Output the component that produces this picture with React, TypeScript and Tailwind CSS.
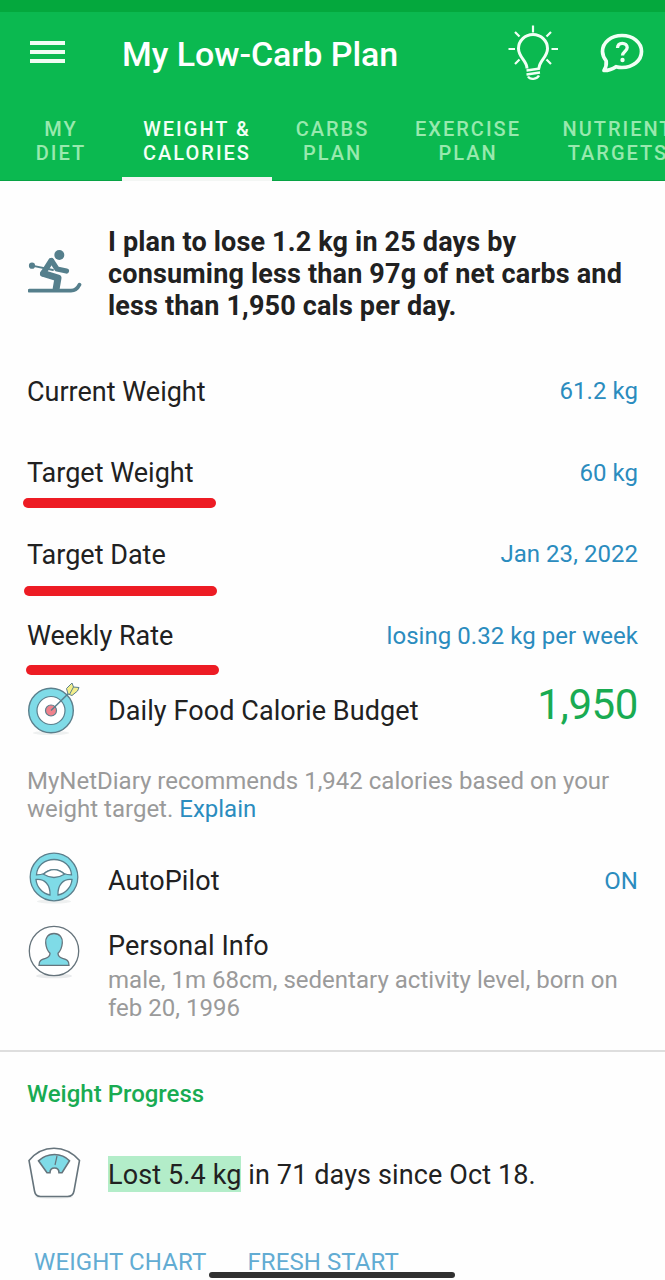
import type { ReactNode } from "react";

type Tab = { lines: [string, string]; className: string; active?: boolean };
type Stat = { label: string; value: string; mark?: string };

const tabs: Tab[] = [
  { lines: ["MY", "DIET"], className: "w-[122px]" },
  { lines: ["WEIGHT &", "CALORIES"], className: "w-[150px]", active: true },
  { lines: ["CARBS", "PLAN"], className: "w-[121px]" },
  { lines: ["EXERCISE", "PLAN"], className: "w-[150px]" },
  { lines: ["NUTRIENT", "TARGETS"], className: "w-[150px]" },
];

const stats: Stat[] = [
  { label: "Current Weight", value: "61.2 kg" },
  { label: "Target Weight", value: "60 kg", mark: "left-[23px] top-[65px]" },
  { label: "Target Date", value: "Jan 23, 2022", mark: "left-[24px] top-[72px]" },
  {
    label: "Weekly Rate",
    value: "losing 0.32 kg per week",
    mark: "left-[26px] top-[69px]",
  },
];

function BulbIcon() {
  return (
    <svg className="-mt-[2px]" width="52" height="56" viewBox="0 0 52 56" fill="none" stroke="#f1fff5">
      <path
        d="M20 43.500c0-8-8.500-11-8.500-20a14.500 14 0 0 1 29 0c0 9-8.500 12-8.500 20"
        strokeWidth="3"
      />
      <path
        d="M26 .5v7M8 7l4.500 4.500M44 7l-4.500 4.500M1.500 24H8M44.500 24H51M8 39l4.500-4.500M44 39l-4.500-4.500"
        strokeWidth="2.200"
      />
      <path
        d="M19.500 45.500 33 43.500M19.500 49.500 33 47.500M21 51.500c2 3.500 9 3 11-1"
        strokeWidth="2.300"
      />
    </svg>
  );
}

function HelpIcon() {
  return (
    <svg width="44" height="42" viewBox="0 0 44 42" fill="none" stroke="#f1fff5">
      <path
        d="M4 37.500c1.800-2.800 2.600-6 2.200-9.500C4 25 2.500 22 2.500 18.500 2.500 9.500 11 2.500 22 2.500s19.500 7 19.500 16-8.500 16-19.500 16c-2 0-4-.3-6-.8-3.500 2.500-7.500 3.800-12 3.800Z"
        strokeWidth="3.700"
        strokeLinejoin="round"
      />
      <path
        d="M17.500 15c.2-3 2-4.700 4.800-4.700 2.900 0 4.900 1.700 4.900 4.200 0 3.800-4.700 4-4.700 8"
        strokeWidth="3.300"
      />
      <circle cx="22.500" cy="27" r="2.200" fill="#f1fff5" stroke="none" />
    </svg>
  );
}

function SkierIcon() {
  return (
    <svg
      className="-mt-[1px]"
      width="54"
      height="46"
      viewBox="0 0 54 46"
      fill="none"
      stroke="#557f8c"
      strokeLinecap="round"
      strokeLinejoin="round"
    >
      <circle cx="31.300" cy="7" r="5" fill="#557f8c" stroke="none" />
      <circle cx="4" cy="17.700" r="3.100" fill="#557f8c" stroke="none" />
      <path d="M4 17.700 25 22" strokeWidth="1.800" />
      <path d="m23 13-8 12.500" strokeWidth="5.800" />
      <path d="m23.500 12.500 5.500 8.500 9.500 2" strokeWidth="5.200" />
      <path d="m15.500 25.500 14.500 4.500-1.800 10.500" strokeWidth="7" />
      <path d="M1.500 42.700H43c4 0 6.500-2 8.500-6" strokeWidth="3.700" />
    </svg>
  );
}

function TargetIcon() {
  return (
    <svg className="relative -top-[2px] -left-[1px]" width="54" height="54" viewBox="0 0 54 54" stroke="#5b7f8c">
      <ellipse cx="24" cy="51" rx="18" ry="2" fill="#eef0f0" stroke="none" />
      <circle cx="24" cy="28.500" r="22.300" fill="#7fdbe7" strokeWidth="1.400" />
      <circle cx="24" cy="28.500" r="14" fill="#fff" strokeWidth="1.200" />
      <circle cx="24" cy="28.500" r="5.500" fill="#f0828c" strokeWidth="1.200" />
      <path d="M24 28.500 46 7" strokeWidth="1.500" />
      <path
        d="m41 12-1.500-5.500L45 1l1.500 4L52 5.500 50.500 9 45 13.500Z"
        fill="#f3ee8b"
        strokeWidth="1"
      />
      <path d="m42.500 12.500 4-7.500" fill="none" />
    </svg>
  );
}

function WheelIcon() {
  return (
    <svg width="50" height="52" viewBox="0 0 50 52" stroke="#5b7f8c" strokeWidth="1.300">
      <ellipse cx="25" cy="49.500" rx="17" ry="2" fill="#eef0f0" stroke="none" />
      <circle cx="25" cy="25" r="23.800" fill="#7fdbe7" />
      <path
        d="M7.500 22.800C8 14 15.500 7.500 25 7.500S42 14 42.500 22.800c-3 0-5.500-.3-7.500-1.300-6-5-14-5-20 0-2 1-4.500 1.300-7.500 1.300Z"
        fill="#fff"
      />
      <path d="M14.500 22.300c6.500-6.300 14.500-6.300 21 0-6.500 4-14.500 4-21 0Z" fill="#fff" />
      <path d="M7 27.500c8.500-1 14.500 5 14 15.500C13.500 41.500 7.500 35 7 27.500Z" fill="#fff" />
      <path d="M43 27.500c-8.500-1-14.500 5-14 15.500C36.500 41.500 42.500 35 43 27.500Z" fill="#fff" />
    </svg>
  );
}

function PersonIcon() {
  return (
    <svg width="52" height="54" viewBox="0 0 52 54" stroke="#66747c" strokeWidth="1.300">
      <ellipse cx="26" cy="51" rx="18" ry="2.300" fill="#e9ebec" stroke="none" />
      <circle cx="26" cy="26" r="24.700" fill="#fff" />
      <path
        d="M26 8.500c-6 0-8.800 4.300-8.300 9.500.4 5 2 8 4.300 10.300 0 3.200-1.500 4.200-4.500 5-4.500 1.200-6.500 2.500-6.500 7h30c0-4.500-2-5.800-6.500-7-3-.8-4.500-1.800-4.500-5 2.300-2.300 3.900-5.300 4.300-10.300.5-5.200-2.300-9.500-8.300-9.500Z"
        fill="#7fdbe7"
      />
    </svg>
  );
}

function ScaleIcon() {
  return (
    <svg width="54" height="52" viewBox="0 0 54 52" stroke="#66747c" strokeWidth="1.600">
      <ellipse cx="26" cy="50" rx="19" ry="1.800" fill="#eceeee" stroke="none" />
      <path
        d="M1 13.500C7.500 5.500 16 1.200 26 1.200s18.500 4.300 25.500 12.300L46 44c-.6 3.500-2.500 5.500-6.500 5.500h-27C9 49.500 7.100 47.500 6.500 44Z"
        fill="#fff"
      />
      <path
        d="M10.500 13.800C15 9.500 20.500 7.500 26.500 7.500S37.500 9.500 41.500 13.800L34 25.700h-3c0-2.900-2-4.700-4.500-4.700S22 22.800 22 25.700h-3Z"
        fill="#7fdbe7"
      />
      <path d="m29 9-2 9" fill="none" strokeWidth="1.200" />
    </svg>
  );
}

function InfoRow({
  icon,
  className,
  children,
}: {
  icon: ReactNode;
  className: string;
  children: ReactNode;
}) {
  return (
    <div className={`flex pr-[27px] ${className}`}>
      <div className="w-[108px] shrink-0 pl-[28px]">{icon}</div>
      {children}
    </div>
  );
}

export default function App() {
  return (
    <div className="relative h-[1280px] w-[665px] overflow-hidden bg-[#fefefe] font-['Roboto',sans-serif] text-[#212121]">
      <header className="h-[181px] border-b border-[#07a344] border-t-[12px] border-t-[#04a83d] bg-[#0bb950] text-white">
        <div className="flex h-[84px] items-center">
          <button className="-mt-[5px] ml-[30px] flex h-[22px] w-[35px] flex-col justify-between" aria-label="Menu">
            <span className="h-1 w-full bg-[#effdf3]" />
            <span className="h-1 w-full bg-[#effdf3]" />
            <span className="h-1 w-full bg-[#effdf3]" />
          </button>
          <h1 className="mt-[1px] ml-[57px] grow whitespace-nowrap text-[34px] font-medium tracking-[-0.05px]">
            My Low-Carb Plan
          </h1>
          <BulbIcon />
          <div className="mr-[21px] ml-[41px]">
            <HelpIcon />
          </div>
        </div>
        <nav className="flex h-[85px] w-[720px]">
          {tabs.map((tab) => (
            <button
              key={tab.lines[0]}
              className={`flex shrink-0 flex-col items-center pt-[21px] text-[20px] leading-[24px] font-medium tracking-[2px] whitespace-nowrap ${tab.className} ${
                tab.active ? "border-b-4 border-[#f3f6f4] text-[#f3fff6]" : "text-[#98e9ae]"
              }`}
            >
              <span>{tab.lines[0]}</span>
              <span>{tab.lines[1]}</span>
            </button>
          ))}
        </nav>
      </header>

      <InfoRow className="h-[170px] pt-[45px]" icon={<div className="pt-[23px]"><SkierIcon /></div>}>
        <p className="text-[27px] leading-[32px] font-bold tracking-[0.17px] whitespace-nowrap">
          I plan to lose 1.2 kg in 25 days by
          <br />
          consuming less than 97g of net carbs and
          <br />
          less than 1,950 cals per day.
        </p>
      </InfoRow>

      {stats.map((stat) => (
        <div
          key={stat.label}
          className="relative flex h-[81.5px] items-center justify-between px-[27px]"
        >
          <span className="text-[27px]">{stat.label}</span>
          <span className="-mt-[1px] text-[24px] tracking-[0.04px] text-[#2b8cbe]">
            {stat.value}
          </span>
          {stat.mark && (
            <span className={`absolute h-[10px] w-[193px] rounded-full bg-[#ed1c24] ${stat.mark}`} />
          )}
        </div>
      ))}

      <InfoRow className="h-[67px] items-center" icon={<TargetIcon />}>
        <span className="mt-[2px] grow text-[27px] tracking-[0.08px] whitespace-nowrap">
          Daily Food Calorie Budget
        </span>
        <span className="-mt-[11px] text-[42px] leading-none tracking-[-0.4px] text-[#19ab52]">
          1,950
        </span>
      </InfoRow>

      <p className="mt-[23px] h-[56px] px-[27px] text-[24px] leading-[28px] whitespace-nowrap text-[#9a9a9a]">
        MyNetDiary recommends 1,942 calories based on your
        <br />
        weight target. <a className="text-[#2b8cbe]">Explain</a>
      </p>

      <InfoRow className="h-[101px] pt-[29px]" icon={<div className="pl-[1px]"><WheelIcon /></div>}>
        <span className="mt-[11px] grow text-[27px] leading-[36px] tracking-[0.1px]">AutoPilot</span>
        <span className="mt-[11px] text-[24px] leading-[36px] text-[#2b8cbe]">ON</span>
      </InfoRow>

      <InfoRow className="h-[126px]" icon={<div className="pt-[1px]"><PersonIcon /></div>}>
        <div className="pt-[4px] whitespace-nowrap">
          <div className="text-[27px] leading-[36px] tracking-[0.1px]">Personal Info</div>
          <p className="mt-[2px] text-[24px] leading-[28px] tracking-[0.02px] text-[#9a9a9a]">
            male, 1m 68cm, sedentary activity level, born on
            <br />
            feb 20, 1996
          </p>
        </div>
      </InfoRow>

      <section className="border-t-2 border-[#dedede]">
        <h2 className="pt-[28px] pl-[27px] text-[24px] leading-[28px] font-medium text-[#19ab52]">
          Weight Progress
        </h2>
        <InfoRow className="pt-[39px]" icon={<ScaleIcon />}>
          <p className="mt-[9px] h-[36px] text-[27px] leading-[38px] tracking-[0.12px] whitespace-nowrap">
            <span className="inline-block h-[36px] bg-[#b3edc9]">Lost 5.4 kg</span> in 71 days since
            Oct 18.
          </p>
        </InfoRow>
        <div className="mt-[49px] flex gap-[41px] pl-[34px] text-[24px] leading-[28px] tracking-[0.1px] whitespace-nowrap text-[#62acd3]">
          <button>WEIGHT CHART</button>
          <button>FRESH START</button>
        </div>
      </section>

      <div className="absolute top-[1272px] left-[209px] h-[6px] w-[246px] rounded-full bg-[#303030]" />
    </div>
  );
}
